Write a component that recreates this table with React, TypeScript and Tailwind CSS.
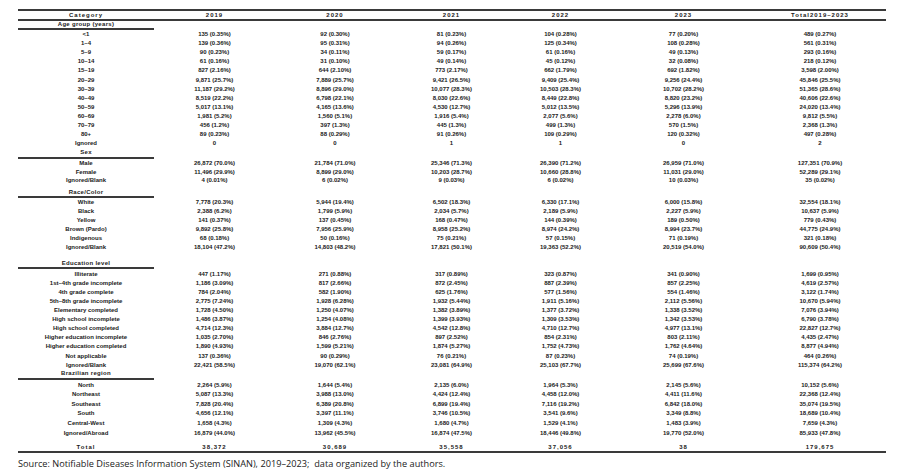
const grid = 'grid grid-cols-[136px_121px_120px_113px_105px_141px_132px] items-center text-center whitespace-nowrap';

type Section = {
  title: string;
  titleCls: string;
  rowCls: string;
  rows: string[][];
};

const sections: Section[] = [
  {
    title: 'Age group (years)',
    titleCls: 'h-[6.5px]',
    rowCls: 'h-[9.12px]',
    rows: [
      ['<1', '135 (0.35%)', '92 (0.30%)', '81 (0.23%)', '104 (0.28%)', '77 (0.20%)', '489 (0.27%)'],
      ['1–4', '139 (0.36%)', '95 (0.31%)', '94 (0.26%)', '125 (0.34%)', '108 (0.28%)', '561 (0.31%)'],
      ['5–9', '90 (0.23%)', '34 (0.11%)', '59 (0.17%)', '61 (0.16%)', '49 (0.13%)', '293 (0.16%)'],
      ['10–14', '61 (0.16%)', '31 (0.10%)', '49 (0.14%)', '45 (0.12%)', '32 (0.08%)', '218 (0.12%)'],
      ['15–19', '827 (2.16%)', '644 (2.10%)', '773 (2.17%)', '662 (1.79%)', '692 (1.82%)', '3,598 (2.00%)'],
      ['20–29', '9,871 (25.7%)', '7,889 (25.7%)', '9,421 (26.5%)', '9,409 (25.4%)', '9,256 (24.4%)', '45,846 (25.5%)'],
      ['30–39', '11,187 (29.2%)', '8,896 (29.0%)', '10,077 (28.3%)', '10,503 (28.3%)', '10,702 (28.2%)', '51,365 (28.6%)'],
      ['40–49', '8,519 (22.2%)', '6,798 (22.1%)', '8,030 (22.6%)', '8,449 (22.8%)', '8,820 (23.2%)', '40,606 (22.6%)'],
      ['50–59', '5,017 (13.1%)', '4,165 (13.6%)', '4,530 (12.7%)', '5,012 (13.5%)', '5,296 (13.9%)', '24,020 (13.4%)'],
      ['60–69', '1,981 (5.2%)', '1,560 (5.1%)', '1,916 (5.4%)', '2,077 (5.6%)', '2,278 (6.0%)', '9,812 (5.5%)'],
      ['70–79', '456 (1.2%)', '397 (1.3%)', '445 (1.3%)', '499 (1.3%)', '570 (1.5%)', '2,368 (1.3%)'],
      ['80+', '89 (0.23%)', '88 (0.29%)', '91 (0.26%)', '109 (0.29%)', '120 (0.32%)', '497 (0.28%)'],
      ['Ignored', '0', '0', '1', '1', '0', '2'],
    ],
  },
  {
    title: 'Sex',
    titleCls: 'h-[9px]',
    rowCls: 'h-[8.6px]',
    rows: [
      ['Male', '26,872 (70.0%)', '21,784 (71.0%)', '25,346 (71.3%)', '26,390 (71.2%)', '26,959 (71.0%)', '127,351 (70.9%)'],
      ['Female', '11,496 (29.9%)', '8,899 (29.0%)', '10,203 (28.7%)', '10,660 (28.8%)', '11,031 (29.0%)', '52,289 (29.1%)'],
      ['Ignored/Blank', '4 (0.01%)', '6 (0.02%)', '9 (0.03%)', '6 (0.02%)', '10 (0.03%)', '35 (0.02%)'],
    ],
  },
  {
    title: 'Race/Color',
    titleCls: 'h-[11.3px] pt-[3.5px]',
    rowCls: 'h-[8.95px]',
    rows: [
      ['White', '7,778 (20.3%)', '5,944 (19.4%)', '6,502 (18.3%)', '6,330 (17.1%)', '6,000 (15.8%)', '32,554 (18.1%)'],
      ['Black', '2,388 (6.2%)', '1,799 (5.9%)', '2,034 (5.7%)', '2,189 (5.9%)', '2,227 (5.9%)', '10,637 (5.9%)'],
      ['Yellow', '141 (0.37%)', '137 (0.45%)', '168 (0.47%)', '144 (0.39%)', '189 (0.50%)', '779 (0.43%)'],
      ['Brown (Pardo)', '9,892 (25.8%)', '7,956 (25.9%)', '8,958 (25.2%)', '8,974 (24.2%)', '8,994 (23.7%)', '44,775 (24.9%)'],
      ['Indigenous', '68 (0.18%)', '50 (0.16%)', '75 (0.21%)', '57 (0.15%)', '71 (0.19%)', '321 (0.18%)'],
      ['Ignored/Blank', '18,104 (47.2%)', '14,803 (48.2%)', '17,821 (50.1%)', '19,363 (52.2%)', '20,519 (54.0%)', '90,609 (50.4%)'],
    ],
  },
  {
    title: 'Education level',
    titleCls: 'h-[15.8px] pt-[7px]',
    rowCls: 'h-[9.07px]',
    rows: [
      ['Illiterate', '447 (1.17%)', '271 (0.88%)', '317 (0.89%)', '323 (0.87%)', '341 (0.90%)', '1,699 (0.95%)'],
      ['1st–4th grade incomplete', '1,186 (3.09%)', '817 (2.66%)', '872 (2.45%)', '887 (2.39%)', '857 (2.25%)', '4,619 (2.57%)'],
      ['4th grade complete', '784 (2.04%)', '582 (1.90%)', '625 (1.76%)', '577 (1.56%)', '554 (1.46%)', '3,122 (1.74%)'],
      ['5th–8th grade incomplete', '2,775 (7.24%)', '1,928 (6.28%)', '1,932 (5.44%)', '1,911 (5.16%)', '2,112 (5.56%)', '10,670 (5.94%)'],
      ['Elementary completed', '1,728 (4.50%)', '1,250 (4.07%)', '1,382 (3.89%)', '1,377 (3.72%)', '1,338 (3.52%)', '7,076 (3.94%)'],
      ['High school incomplete', '1,486 (3.87%)', '1,254 (4.08%)', '1,399 (3.93%)', '1,309 (3.53%)', '1,342 (3.53%)', '6,790 (3.78%)'],
      ['High school completed', '4,714 (12.3%)', '3,884 (12.7%)', '4,542 (12.8%)', '4,710 (12.7%)', '4,977 (13.1%)', '22,827 (12.7%)'],
      ['Higher education incomplete', '1,035 (2.70%)', '846 (2.76%)', '897 (2.52%)', '854 (2.31%)', '803 (2.11%)', '4,435 (2.47%)'],
      ['Higher education completed', '1,890 (4.93%)', '1,599 (5.21%)', '1,874 (5.27%)', '1,752 (4.73%)', '1,762 (4.64%)', '8,877 (4.94%)'],
      ['Not applicable', '137 (0.36%)', '90 (0.29%)', '76 (0.21%)', '87 (0.23%)', '74 (0.19%)', '464 (0.26%)'],
      ['Ignored/Blank', '22,421 (58.5%)', '19,070 (62.1%)', '23,081 (64.9%)', '25,103 (67.7%)', '25,699 (67.6%)', '115,374 (64.2%)'],
    ],
  },
  {
    title: 'Brazilian region',
    titleCls: 'h-[8.7px]',
    rowCls: 'h-[9.6px]',
    rows: [
      ['North', '2,264 (5.9%)', '1,644 (5.4%)', '2,135 (6.0%)', '1,964 (5.3%)', '2,145 (5.6%)', '10,152 (5.6%)'],
      ['Northeast', '5,087 (13.3%)', '3,988 (13.0%)', '4,424 (12.4%)', '4,458 (12.0%)', '4,411 (11.6%)', '22,368 (12.4%)'],
      ['Southeast', '7,828 (20.4%)', '6,389 (20.8%)', '6,899 (19.4%)', '7,116 (19.2%)', '6,842 (18.0%)', '35,074 (19.5%)'],
      ['South', '4,656 (12.1%)', '3,397 (11.1%)', '3,746 (10.5%)', '3,541 (9.6%)', '3,349 (8.8%)', '18,689 (10.4%)'],
      ['Central-West', '1,658 (4.3%)', '1,309 (4.3%)', '1,680 (4.7%)', '1,529 (4.1%)', '1,483 (3.9%)', '7,659 (4.3%)'],
      ['Ignored/Abroad', '16,879 (44.0%)', '13,962 (45.5%)', '16,874 (47.5%)', '18,446 (49.8%)', '19,770 (52.0%)', '85,933 (47.8%)'],
    ],
  },
];

const header = ['Category', '2019', '2020', '2021', '2022', '2023', 'Total2019–2023'];
const totals = ['Total', '38,372', '30,689', '35,558', '37,056', '38', '179,675'];

export default function App() {
  return (
    <div className="w-[923px] h-[472px] overflow-hidden bg-white text-[#1a1a1a] font-['Liberation_Sans',Arial,sans-serif]">
      <div className="pt-[9px] pl-[18px]">
        <div className="w-[868px] text-[6px] leading-none font-bold">
          {/* header */}
          <div className={`${grid} h-[12px] border-y-2 border-[#3a3a3a] tracking-[1px]`}>
            {header.map((h) => (
              <div key={h}>{h}</div>
            ))}
          </div>

          {sections.map((s) => (
            <div key={s.title}>
              <div className={`${s.titleCls} w-[136px] flex items-center justify-center tracking-[0.3px]`}>
                {s.title}
              </div>
              <div className="w-[136px] h-[2px] bg-[#3a3a3a]" />
              {s.rows.map((r, i) => (
                <div key={i} className={`${grid} ${s.rowCls}`}>
                  {r.map((c, j) => (
                    <div key={j}>{c}</div>
                  ))}
                </div>
              ))}
            </div>
          ))}

          {/* total */}
          <div className={`${grid} h-[15.2px] pt-[6px] border-b-2 border-[#3a3a3a] tracking-[1px]`}>
            {totals.map((t, j) => (
              <div key={j}>{t}</div>
            ))}
          </div>
        </div>
        <p className="mt-[5px] text-[9.2px] leading-[12px] text-[#222] font-['Open_Sans',sans-serif]">
          Source: Notifiable Diseases Information System (SINAN), 2019–2023;&nbsp; data organized by the authors.
        </p>
      </div>
    </div>
  );
}
